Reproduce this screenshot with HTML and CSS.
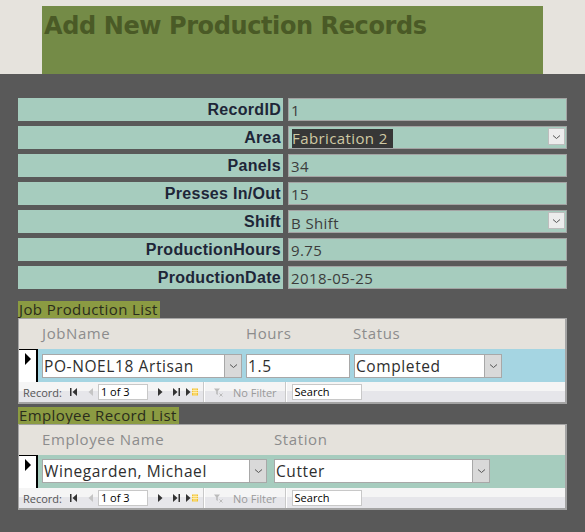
FILE: index.html
```html
<!DOCTYPE html>
<html>
<head>
<meta charset="utf-8">
<link rel="stylesheet" href="styles.css">
</head>
<body>
<header class="top">
  <div class="banner"><h1 class="title">Add New Production Records</h1></div>
</header>

<main class="page">
  <div class="form">
    <div class="row"><div class="lbl">RecordID</div><div class="val">1</div></div>
    <div class="row"><div class="lbl">Area</div><div class="val combo"><span class="sel">Fabrication 2</span><span class="dd"><svg width="9" height="6" viewBox="0 0 9 6"><path d="M1 1.5 L4.5 4.5 L8 1.5" fill="none" stroke="#555" stroke-width="1"/></svg></span></div></div>
    <div class="row"><div class="lbl">Panels</div><div class="val">34</div></div>
    <div class="row"><div class="lbl">Presses In/Out</div><div class="val">15</div></div>
    <div class="row"><div class="lbl">Shift</div><div class="val combo"><span>B Shift</span><span class="dd"><svg width="9" height="6" viewBox="0 0 9 6"><path d="M1 1.5 L4.5 4.5 L8 1.5" fill="none" stroke="#555" stroke-width="1"/></svg></span></div></div>
    <div class="row"><div class="lbl">ProductionHours</div><div class="val">9.75</div></div>
    <div class="row"><div class="lbl">ProductionDate</div><div class="val">2018-05-25</div></div>
  </div>

  <section class="sub sub-job">
    <div class="subtitle">Job Production List</div>
    <div class="subbox">
      <div class="heads">
        <span class="h h-job">JobName</span>
        <span class="h h-hours">Hours</span>
        <span class="h">Status</span>
      </div>
      <div class="datarow blue">
        <div class="selector"><svg width="8" height="12" viewBox="0 0 8 12"><path d="M1 0 L7 6 L1 12 Z" fill="#000"/></svg></div>
        <div class="ctl cb w-job"><span class="txt">PO-NOEL18 Artisan</span><span class="btn"><svg width="9" height="6" viewBox="0 0 9 6"><path d="M1 1.5 L4.5 4.5 L8 1.5" fill="none" stroke="#555" stroke-width="1"/></svg></span></div>
        <div class="ctl w-hours"><span class="txt">1.5</span></div>
        <div class="ctl cb w-status"><span class="txt">Completed</span><span class="btn"><svg width="9" height="6" viewBox="0 0 9 6"><path d="M1 1.5 L4.5 4.5 L8 1.5" fill="none" stroke="#555" stroke-width="1"/></svg></span></div>
      </div>
      <div class="nav">
        <span class="navlbl">Record:</span>
        <svg class="ic first" width="7" height="8" viewBox="0 0 7 8"><rect x="0" y="0" width="1.5" height="8" fill="#333"/><path d="M7 0 L2.5 4 L7 8 Z" fill="#333"/></svg>
        <svg class="ic prev" width="5" height="8" viewBox="0 0 5 8"><path d="M5 0 L0.5 4 L5 8 Z" fill="#c4c4c4"/></svg>
        <span class="navbox">1 of 3</span>
        <svg class="ic next" width="5" height="8" viewBox="0 0 5 8"><path d="M0 0 L4.5 4 L0 8 Z" fill="#333"/></svg>
        <svg class="ic last" width="7" height="8" viewBox="0 0 7 8"><path d="M0 0 L4.5 4 L0 8 Z" fill="#333"/><rect x="5.5" y="0" width="1.5" height="8" fill="#333"/></svg>
        <svg class="ic new" width="12" height="8" viewBox="0 0 12 8"><path d="M0 0 L4.5 4 L0 8 Z" fill="#333"/><rect x="6" y="0.5" width="6" height="7" fill="#f2c230"/><path d="M6 2.5 H12 M6 4.5 H12 M8 0.5 V7.5 M10 0.5 V7.5" stroke="#fff3c0" stroke-width="0.8"/></svg>
        <span class="sep"></span>
        <svg class="ic filt" width="9" height="9" viewBox="0 0 9 9"><path d="M0 0.5 H6 L3.8 3.2 V7 L2.2 6 V3.2 Z" fill="#bbb"/><path d="M5.5 5.5 L8.5 8.5 M8.5 5.5 L5.5 8.5" stroke="#bbb" stroke-width="1"/></svg>
        <span class="nofilter">No Filter</span>
        <span class="sep"></span>
        <span class="search">Search</span>
      </div>
    </div>
  </section>

  <section class="sub sub-emp">
    <div class="subtitle">Employee Record List</div>
    <div class="subbox">
      <div class="heads">
        <span class="h h-emp">Employee Name</span>
        <span class="h">Station</span>
      </div>
      <div class="datarow green">
        <div class="selector"><svg width="8" height="12" viewBox="0 0 8 12"><path d="M1 0 L7 6 L1 12 Z" fill="#000"/></svg></div>
        <div class="ctl cb w-emp"><span class="txt">Winegarden, Michael</span><span class="btn"><svg width="9" height="6" viewBox="0 0 9 6"><path d="M1 1.5 L4.5 4.5 L8 1.5" fill="none" stroke="#555" stroke-width="1"/></svg></span></div>
        <div class="ctl cb w-station"><span class="txt">Cutter</span><span class="btn"><svg width="9" height="6" viewBox="0 0 9 6"><path d="M1 1.5 L4.5 4.5 L8 1.5" fill="none" stroke="#555" stroke-width="1"/></svg></span></div>
      </div>
      <div class="nav">
        <span class="navlbl">Record:</span>
        <svg class="ic first" width="7" height="8" viewBox="0 0 7 8"><rect x="0" y="0" width="1.5" height="8" fill="#333"/><path d="M7 0 L2.5 4 L7 8 Z" fill="#333"/></svg>
        <svg class="ic prev" width="5" height="8" viewBox="0 0 5 8"><path d="M5 0 L0.5 4 L5 8 Z" fill="#c4c4c4"/></svg>
        <span class="navbox">1 of 3</span>
        <svg class="ic next" width="5" height="8" viewBox="0 0 5 8"><path d="M0 0 L4.5 4 L0 8 Z" fill="#333"/></svg>
        <svg class="ic last" width="7" height="8" viewBox="0 0 7 8"><path d="M0 0 L4.5 4 L0 8 Z" fill="#333"/><rect x="5.5" y="0" width="1.5" height="8" fill="#333"/></svg>
        <svg class="ic new" width="12" height="8" viewBox="0 0 12 8"><path d="M0 0 L4.5 4 L0 8 Z" fill="#333"/><rect x="6" y="0.5" width="6" height="7" fill="#f2c230"/><path d="M6 2.5 H12 M6 4.5 H12 M8 0.5 V7.5 M10 0.5 V7.5" stroke="#fff3c0" stroke-width="0.8"/></svg>
        <span class="sep"></span>
        <svg class="ic filt" width="9" height="9" viewBox="0 0 9 9"><path d="M0 0.5 H6 L3.8 3.2 V7 L2.2 6 V3.2 Z" fill="#bbb"/><path d="M5.5 5.5 L8.5 8.5 M8.5 5.5 L5.5 8.5" stroke="#bbb" stroke-width="1"/></svg>
        <span class="nofilter">No Filter</span>
        <span class="sep"></span>
        <span class="search">Search</span>
      </div>
    </div>
  </section>
</main>
</body>
</html>
```
FILE: styles.css
```css
* { box-sizing: border-box; }
html, body { margin: 0; padding: 0; }
body {
  background: #595959;
  width: 585px;
  height: 532px;
  overflow: hidden;
  font-family: "Liberation Sans", Arial, sans-serif;
}
.top {
  background: #e6e3dd;
  height: 74px;
  padding: 6px 0 0 42px;
}
.banner {
  width: 501px;
  height: 68px;
  background: #748b47;
}
.title {
  margin: 0;
  padding: 6px 0 0 2px;
  font-family: "DejaVu Sans", sans-serif;
  font-weight: bold;
  font-size: 24px;
  line-height: 28px;
  color: #4a5a26;
  letter-spacing: -0.4px;
}
.page { padding: 24px 0 0 18px; }
.form { display: flex; flex-direction: column; gap: 5px; }
.row { display: flex; gap: 5px; height: 23px; }
.lbl {
  width: 265px;
  background: #a6ccbe;
  text-align: right;
  font-weight: bold;
  font-size: 16px;
  letter-spacing: 0.3px;
  line-height: 23px;
  padding-right: 2px;
  color: #1e2638;
}
.val {
  width: 279px;
  background: #a6ccbe;
  border: 1px solid #a3a3a3;
  font-family: "Open Sans", sans-serif;
  font-size: 15px;
  letter-spacing: 0.4px;
  line-height: 21px;
  padding: 1px 0 0 2px;
  color: #3c3c3c;
  display: flex;
  justify-content: space-between;
  align-items: flex-start;
}
.combo { padding-top: 2px; }
.sel {
  background: #373737;
  color: #cfc9a4;
  padding: 0 5px 0 0;
  margin-left: 1px;
  line-height: 19px;
}
.dd {
  width: 17px;
  height: 17px;
  margin: -1px 1px 0 0;
  background: #ececec;
  border: 1px solid #bdbdbd;
  display: flex;
  align-items: center;
  justify-content: center;
}
.sub { display: flex; flex-direction: column; }
.sub-job { margin-top: 12px; }
.sub-emp { margin-top: 3px; }
.subtitle {
  align-self: flex-start;
  background: #8b9b42;
  color: #2a2c1c;
  font-family: "Open Sans", sans-serif;
  font-size: 15px;
  letter-spacing: 0.4px;
  line-height: 17px;
  height: 17px;
  padding: 0 2px 0 1px;
}
.subbox {
  width: 549px;
  border: 1px solid #a4a4a4;
  border-width: 1px 2px 2px 1px;
  background: #e5e2dc;
}
.heads {
  height: 30px;
  display: flex;
  align-items: center;
  padding-left: 23px;
  padding-bottom: 2px;
  font-family: "Open Sans", sans-serif;
  font-size: 15px;
  letter-spacing: 0.6px;
  color: #8c8c8c;
}
.h-job { width: 204px; }
.h-hours { width: 107px; }
.h-emp { width: 232px; }
.datarow {
  height: 33px;
  display: flex;
  align-items: flex-start;
}
.blue { background: #a5d5e2; }
.green { background: #a6ccbe; }
.selector {
  width: 19px;
  height: 33px;
  background: #fff;
  border-top: 1px solid #000;
  border-right: 2px solid #000;
  padding: 3px 0 0 5px;
  margin-right: 4px;
}
.selector svg { display: block; }
.ctl {
  margin-top: 5px;
  height: 24px;
  background: #fff;
  border: 1px solid #a8a8a8;
  display: flex;
  justify-content: space-between;
  margin-right: 4px;
  font-family: "Open Sans", sans-serif;
  font-size: 15.5px;
  letter-spacing: 0.6px;
  color: #2e2e2e;
}
.green .ctl { margin-top: 4px; }
.txt { padding-left: 1px; line-height: 22px; }
.btn {
  width: 17px;
  height: 22px;
  background: #d9d9d9;
  border-left: 1px solid #a8a8a8;
  display: flex;
  align-items: center;
  justify-content: center;
}
.w-job { width: 200px; }
.w-hours { width: 104px; }
.w-status { width: 148px; }
.w-emp { width: 225px; margin-right: 7px; }
.w-station { width: 216px; }
.nav {
  height: 20px;
  background: linear-gradient(#f5f5f5 0%, #f5f5f5 45%, #e6e6ea 45%, #e6e6ea 100%);
  display: flex;
  align-items: center;
  font-family: "Open Sans", sans-serif;
  font-size: 11px;
  color: #555;
  padding-left: 4px;
}
.navlbl { margin-right: 8px; }
.ic { display: block; flex: none; }
.first { margin-right: 11px; }
.prev { margin-right: 5px; }
.navbox {
  width: 50px;
  height: 16px;
  background: #fff;
  border: 1px solid #c8c8c8;
  color: #000;
  font-size: 11px;
  line-height: 14px;
  padding-left: 2px;
  margin-right: 10px;
}
.next { margin-right: 10px; }
.last { margin-right: 6px; }
.new { margin-right: 5px; }
.sep {
  width: 1px;
  height: 20px;
  background: #c9c9c9;
  border-right: 1px solid #fff;
  box-sizing: content-box;
}
.filt { margin: 0 10px 0 9px; }
.nofilter { color: #9a9a9a; margin-right: 8px; }
.search {
  margin-left: 5px;
  width: 70px;
  height: 16px;
  background: #fff;
  border: 1px solid #c8c8c8;
  color: #000;
  line-height: 14px;
  padding-left: 2px;
}
```
